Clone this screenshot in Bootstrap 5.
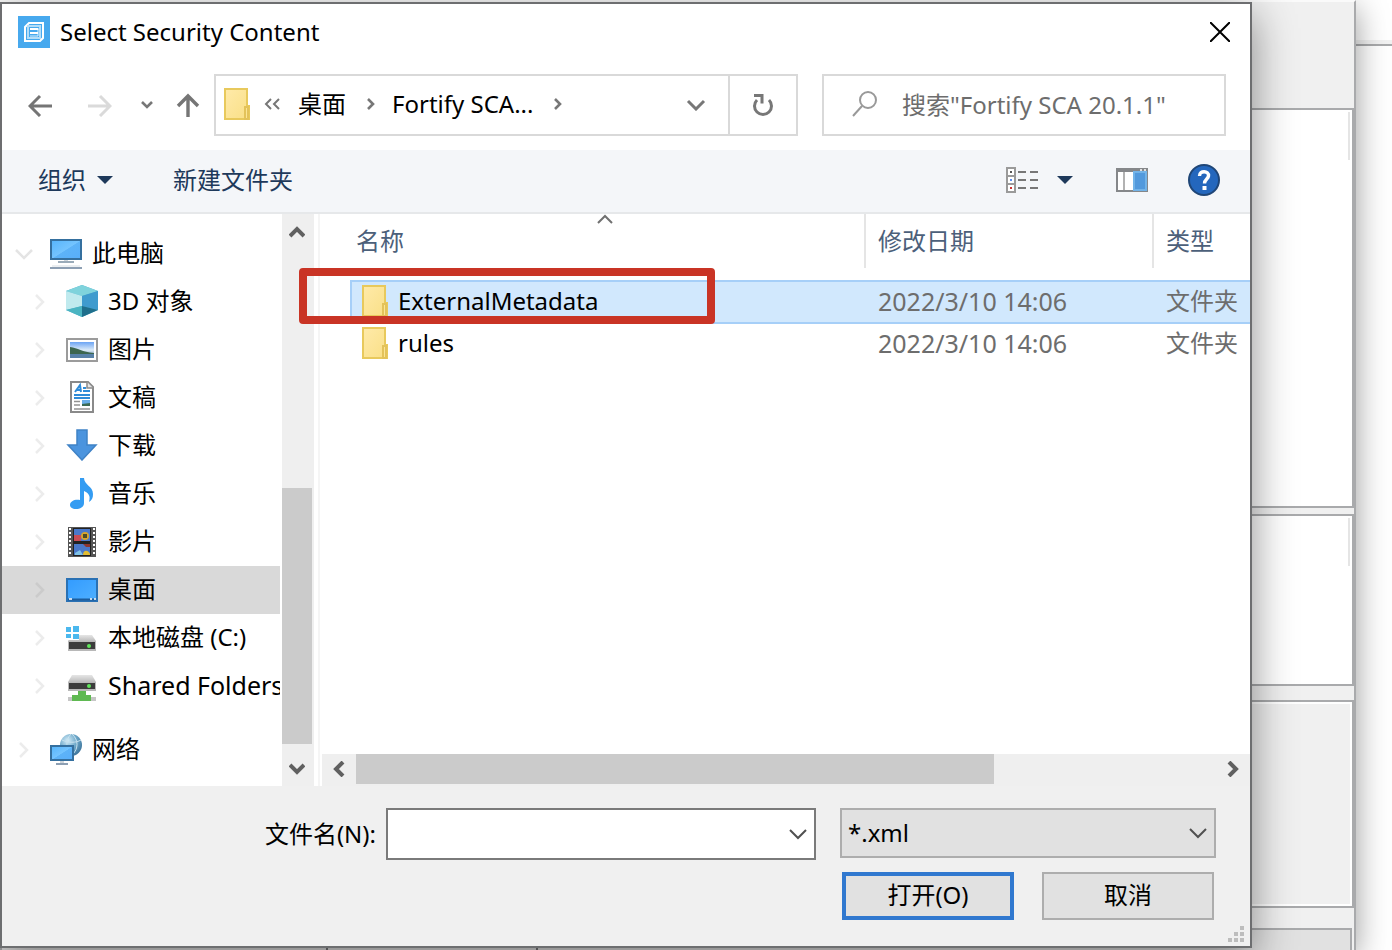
<!DOCTYPE html>
<html lang="zh-CN">
<head>
<meta charset="utf-8">
<meta name="viewport" content="width=device-width, initial-scale=1">
<title>Select Security Content</title>
<link href="https://cdn.jsdelivr.net/npm/bootstrap@5.3.0/dist/css/bootstrap.min.css" rel="stylesheet">
<style>
  :root { --face: #f0f0f0; --edge: #d9d9d9; --ink: #1e395b; --frame: #6d6e70; --rule: #a9aaac; }
  body { font-family: "Noto Sans", "Noto Sans CJK SC", sans-serif; font-size: 24px; line-height: 32px; color: #000; background: #fff; }
  svg { display: block; flex: none; }
  button { color: inherit; }
  .desk { min-height: 100vh; overflow: hidden; }
  .bare { border: 0; background: none; padding: 0; line-height: 32px; }
  .wide { font-size: 25px; }

  /* windows behind the dialog */
  .far-head { height: 46px; border-bottom: 2px solid var(--rule); background: linear-gradient(#fff 40px, #f2f2f2 40px); }
  .owner { position: absolute; inset: 0 36px 0 0; background: var(--face); border-right: 2px solid var(--rule); border-top: 2px solid #fafafa; box-shadow: 0 8px 30px rgba(0,0,0,.4); padding-top: 106px; }
  .pane { border: 2px solid var(--rule); background: #fff; padding: 2px; }
  .pane i { display: block; width: 2px; height: 48px; background: #e5e5e5; }
  .pane-a { flex: 400 1 400px; } .pane-b { flex: 172 1 172px; } .pane-c { flex: 208 1 208px; background: var(--face); box-shadow: inset 0 0 0 2px #fff; }
  .gap-a { height: 6px; } .gap-b { height: 14px; } .gap-c { height: 20px; }
  .under { height: 22px; margin-right: 2px; background: #e1e1e1; border: 2px solid var(--rule); border-bottom: 0; }
  .under span { border-right: 2px solid #77787a; }

  /* dialog */
  .dlg { position: absolute; inset: 2px 140px 2px 0; background: #fff; border: 2px solid var(--frame); box-shadow: 0 12px 40px rgba(0,0,0,.45); }
  .title-row { height: 56px; padding: 0 20px 0 16px; gap: 10px; }
  .nav-row { padding: 14px 24px 14px 26px; height: 90px; }
  .box { height: 62px; border: 2px solid var(--edge); background: #fff; }
  .path-bar { padding: 0 0 2px 8px; }
  .reload { width: 68px; border-left: 2px solid var(--edge) !important; }
  .find { width: 404px; margin-left: 24px; padding: 0 0 2px 28px; gap: 24px; }
  .find input { border: 0; outline: 0; padding: 0; min-width: 0; background: none; height: 40px; color: #6d6d6d; }
  .find input::placeholder { color: #6d6d6d; opacity: 1; }
  .tools { height: 64px; padding: 0 30px 2px 36px; background: #f4f6f9; border-bottom: 2px solid #e6e8ea; color: var(--ink); }

  .side { width: 278px; padding: 16px 0 12px; overflow: hidden; }
  .side a { display: flex; align-items: center; height: 48px; padding: 0 0 2px 12px; color: #000; text-decoration: none; white-space: nowrap; }
  .side a.sub { padding-left: 28px; }
  .side a.on { background: #d9d9d9; }
  .side .tw { width: 20px; margin-right: 16px; }
  .side .pic { width: 32px; height: 32px; margin-right: 10px; }
  .vbar { width: 32px; margin-left: 2px; background: #efefef; }
  .vbar .room { flex: 238 1 0; } .vbar .thumb { flex: 256 1 0; width: 30px; background: #cbcbcb; }
  .vbar button, .hbar button { display: flex; align-items: center; justify-content: center; }
  .vbar button { height: 36px; width: 30px; } .vbar .dn { height: 42px; padding-top: 8px; }
  .files { margin-left: 4px; border-left: 2px solid #f5f5f5; }
  .hbar { height: 32px; margin-left: 2px; background: #efefef; }
  .hbar button { width: 34px; height: 30px; }
  .hbar .thumb { flex: 638 1 0; height: 30px; background: #cbcbcb; } .hbar .room { flex: 222 1 0; }

  .list { table-layout: fixed; width: auto; margin-left: 30px; border-collapse: separate; border-spacing: 0; }
  .list th { font-weight: 400; color: #4c607a; padding: 0 0 12px; }
  .list th div { height: 54px; padding: 11px 0 0 12px; border-left: 2px solid #e5e5e5; white-space: nowrap; }
  .list th:first-child div { border-left: 0; padding-left: 6px; }
  .list td { height: 42px; padding: 0 0 4px 14px; color: #6d6d6d; white-space: nowrap; overflow: hidden; }
  .list td:first-child { padding-left: 12px; color: #000; }
  .list .on td { height: 44px; padding-bottom: 2px; background: #d1e8fd; border: solid #a6cff8; border-width: 2px 0; }
  .list .on td:first-child { border-left-width: 2px; padding-left: 10px; }
  .c-date { width: 288px; } .c-type { width: 98px; }
  .sort { position: absolute; top: 0; left: 277px; }
  .hot { position: absolute; left: -21px; top: 54px; width: 416px; height: 56px; border: 8px solid #c93425; border-radius: 4px; pointer-events: none; }

  .foot { background: var(--face); padding: 22px 34px 26px 32px; height: 160px; }
  .name-box { width: 430px; height: 52px; border: 2px solid #7a7a7a; background: #fff; margin: 0 24px 0 10px; }
  .name-box input { border: 0; outline: 0; background: none; min-width: 0; height: 44px; padding: 0 6px; }
  .name-box button { width: 32px; display: flex; align-items: center; justify-content: center; }
  .kind { width: 376px; height: 50px; border: 2px solid #adadad; border-radius: 0; padding: 0 36px 0 6px; font-size: 24px; line-height: 32px; color: #000; background-color: #e1e1e1; background-position: right 6px center; background-size: 20px 12px;
    background-image: url("data:image/svg+xml,%3Csvg xmlns='http://www.w3.org/2000/svg' viewBox='0 0 20 12'%3E%3Cpath d='M2 2l8 8 8-8' fill='none' stroke='%23505050' stroke-width='2'/%3E%3C/svg%3E"); }
  .act { width: 172px; height: 48px; border: 2px solid #adadad; border-radius: 0; background: #e1e1e1; color: #000; font-size: 24px; line-height: 32px; padding: 0 0 2px; }
  .act.main { border: 4px solid #3078cf; }
  .acts { gap: 28px; padding-right: 2px; margin-top: 12px; }
  .grip { position: absolute; right: 4px; bottom: 2px; }
</style>
</head>
<body>
<svg width="0" height="0" class="position-absolute" aria-hidden="true">
  <defs>
    <linearGradient id="gb" x1="0" y1="0" x2="1" y2="1"><stop offset="0" stop-color="#55b4fb"/><stop offset=".5" stop-color="#74c4ff"/><stop offset=".52" stop-color="#5db3f8"/><stop offset="1" stop-color="#58aefa"/></linearGradient>
    <linearGradient id="gd" x1="0" y1="0" x2="1" y2="1"><stop offset="0" stop-color="#329bff"/><stop offset="1" stop-color="#4fb0ff"/></linearGradient>
    <linearGradient id="gf" x1="0" y1="0" x2="1" y2="1"><stop offset="0" stop-color="#ffeaa9"/><stop offset="1" stop-color="#f9df86"/></linearGradient>
    <linearGradient id="gp" x1="0" y1="0" x2="0" y2="1"><stop offset="0" stop-color="#6ba4f4"/><stop offset=".5" stop-color="#dcebf8"/><stop offset="1" stop-color="#557fa5"/></linearGradient>
    <linearGradient id="gt" x1="0" y1="0" x2="0" y2="1"><stop offset="0" stop-color="#e6e6e6"/><stop offset="1" stop-color="#bcbcbc"/></linearGradient>
    <radialGradient id="gg" cx=".35" cy=".3" r=".8"><stop offset="0" stop-color="#d5edf8"/><stop offset=".5" stop-color="#6fa9ca"/><stop offset="1" stop-color="#356c94"/></radialGradient>
    <symbol id="folder" viewBox="0 0 26 32"><path d="M1 1h22v17h2v13H1z" fill="url(#gf)" stroke="#e8c95c" stroke-width="2"/><path d="M21 31V19h3v12z" fill="#fbe594" stroke="#e3c25a" stroke-width="2"/></symbol>
    <symbol id="right" viewBox="0 0 20 20"><path d="M6 4l7 7-7 7" fill="none" stroke="#ececec" stroke-width="2.5"/></symbol>
    <symbol id="crumb" viewBox="0 0 10 14"><path d="M2 2l5 5-5 5" fill="none" stroke="#777" stroke-width="2.6"/></symbol>
    <symbol id="caret" viewBox="0 0 16 10"><path d="M0 1h16L8 9z" fill="#1e395b"/></symbol>
    <symbol id="thin" viewBox="0 0 20 12"><path d="M2 2l8 8 8-8" fill="none" stroke="#505050" stroke-width="2"/></symbol>
  </defs>
</svg>

<div class="desk position-relative">
  <div class="far-head"></div>
  <div class="owner d-flex flex-column" aria-hidden="true">
    <div class="pane pane-a d-flex justify-content-end"><i></i></div><div class="gap-a"></div>
    <div class="pane pane-b d-flex justify-content-end"><i></i></div><div class="gap-b"></div>
    <div class="pane pane-c"></div><div class="gap-c"></div>
    <div class="under d-flex"><span style="width:24.2%"></span><span style="width:15.6%"></span></div>
  </div>

  <main class="dlg d-flex flex-column">
    <header class="title-row d-flex align-items-center">
      <svg width="32" height="32" viewBox="0 0 32 32"><path fill="#47a9ee" d="M0 0h32v32H0z"/><path d="M11 7h14v15l-3 3H7V11z" fill="none" stroke="#fff" stroke-width="2"/><path d="M10 10h12v12H10z" fill="#47a9ee" stroke="#b4def9" stroke-width="2"/><path d="M13 13h8M13 17h7M20 13v7h-8" fill="none" stroke="#d9effc" stroke-width="1"/><path d="M12 13h8M12 17h8" fill="none" stroke="#fff" stroke-width="2"/></svg>
      <span>Select Security Content</span>
      <button class="bare ms-auto" type="button" aria-label="关闭"><svg width="20" height="20" viewBox="0 0 20 20"><path d="M0 0l20 20M20 0L0 20" stroke="#000" stroke-width="2"/></svg></button>
    </header>

    <div class="nav-row d-flex align-items-center">
      <button class="bare" type="button" aria-label="后退"><svg width="24" height="24" viewBox="0 0 24 24"><path d="M24 13H2M12 3L2 13l10 10" fill="none" stroke="#757575" stroke-width="3"/></svg></button>
      <button class="bare" type="button" aria-label="前进" style="margin-left:36px"><svg width="24" height="24" viewBox="0 0 24 24"><path d="M0 13h22M12 3l10 10-10 10" fill="none" stroke="#dadada" stroke-width="3"/></svg></button>
      <button class="bare" type="button" aria-label="最近" style="margin-left:28px"><svg width="14" height="10" viewBox="0 0 14 10"><path d="M2 2l5 5 5-5" fill="none" stroke="#777" stroke-width="2.6"/></svg></button>
      <button class="bare" type="button" aria-label="上移" style="margin-left:22px"><svg width="24" height="24" viewBox="0 0 24 24"><path d="M12 24V3M2 13L12 3l10 10" fill="none" stroke="#757575" stroke-width="3.4"/></svg></button>
      <div class="box d-flex flex-fill" style="margin-left:14px">
        <nav class="path-bar d-flex align-items-center flex-fill text-nowrap" aria-label="地址">
          <svg width="26" height="32"><use href="#folder"/></svg>
          <svg width="16" height="14" viewBox="0 0 16 14" style="margin-left:14px"><path d="M7 2L2 7l5 5M15 2l-5 5 5 5" fill="none" stroke="#777" stroke-width="2"/></svg>
          <a class="text-black text-decoration-none" href="#" style="margin-left:18px">桌面</a>
          <svg width="10" height="14" style="margin:0 16px 0 20px"><use href="#crumb"/></svg>
          <a class="text-black text-decoration-none" href="#">Fortify SCA...</a>
          <svg width="10" height="14" style="margin-left:20px"><use href="#crumb"/></svg>
          <button class="bare ms-auto" type="button" aria-label="以前的位置" style="margin-right:22px"><svg width="20" height="14" viewBox="0 0 20 14"><path d="M2 4l8 8 8-8" fill="none" stroke="#777" stroke-width="3"/></svg></button>
        </nav>
        <button class="bare reload d-flex align-items-center justify-content-center" type="button" aria-label="刷新"><svg width="22" height="24" viewBox="0 0 22 24"><path d="M17 6a8.500 8.500 0 1 1-12 0" fill="none" stroke="#777" stroke-width="3" transform="translate(0 1)"/><path d="M2 2.500h8v8" fill="none" stroke="#777" stroke-width="3"/></svg></button>
      </div>
      <label class="box find d-flex align-items-center">
        <svg width="26" height="26" viewBox="0 0 26 26"><circle cx="16" cy="9" r="8" fill="none" stroke="#999" stroke-width="2"/><path d="M10 15L1 25" stroke="#999" stroke-width="2"/></svg>
        <input class="flex-fill" type="text" aria-label="搜索" placeholder='搜索"Fortify SCA 20.1.1"'>
      </label>
    </div>

    <div class="tools d-flex align-items-center">
      <button class="bare d-flex align-items-center" type="button">组织<svg width="16" height="10" style="margin-left:11px"><use href="#caret"/></svg></button>
      <button class="bare" type="button" style="margin-left:60px">新建文件夹</button>
      <button class="bare d-flex align-items-center ms-auto" type="button" aria-label="更改视图">
        <svg width="34" height="26" viewBox="0 0 34 26"><path d="M1 1h8v24H1zM1 9h8M1 17h8" fill="#fff" stroke="#9a9a9a" stroke-width="2"/><path d="M4 4h2v2H4z" fill="#555"/><path d="M4 12h2v2H4z" fill="#5b8def"/><path d="M4 20h2v2H4z" fill="#c33"/><path d="M12 5h8m4 0h8M12 13h8m4 0h8M12 21h8m4 0h8" stroke="#777" stroke-width="2"/></svg>
        <svg width="16" height="10" style="margin-left:17px"><use href="#caret"/></svg>
      </button>
      <button class="bare" type="button" aria-label="预览窗格" style="margin-left:43px"><svg width="32" height="24" viewBox="0 0 32 24"><path d="M1 1h30v22H1z" fill="#fff" stroke="#85878a" stroke-width="2"/><path d="M1 2h30" stroke="#85878a" stroke-width="4"/><path d="M8 4v18" stroke="#999" stroke-width="1.5"/><path d="M18 4h12v18H18z" fill="#5299dc" stroke="#72b3e8" stroke-width="2"/><path d="M24 2h2m2 0h2" stroke="#fff" stroke-width="1.5"/></svg></button>
      <button class="bare" type="button" aria-label="帮助" style="margin-left:40px"><svg width="32" height="32" viewBox="0 0 32 32"><circle cx="16" cy="16" r="15" fill="#2467bd" stroke="#1f4677" stroke-width="2"/><path d="M11.500 12c0-6 9.500-5.500 9 0-.3 3-4 3.200-4 7.500" fill="none" stroke="#fff" stroke-width="3.400"/><path d="M14.500 22h4v4h-4z" fill="#fff"/></svg></button>
    </div>

    <div class="d-flex flex-fill">
      <nav class="side flex-shrink-0" aria-label="位置">
        <a href="#"><svg class="tw" width="20" height="20" viewBox="0 0 20 20"><path d="M2 7l8 8 8-8" fill="none" stroke="#e4e4e4" stroke-width="2.500"/></svg>
          <svg class="pic" viewBox="0 0 32 32"><path d="M1 3h30v19H1z" fill="url(#gb)" stroke="#35709f" stroke-width="2"/><path d="M14 23h4v2h-4z" fill="#cfd6dc"/><path d="M8 25h16" stroke="#9aabb9" stroke-width="2"/><path d="M2 29h28" stroke="#d5dde3" stroke-width="1"/><path d="M0 31h32" stroke="#8d9fb3" stroke-width="2"/></svg>此电脑</a>
        <a class="sub" href="#"><svg class="tw" height="20"><use href="#right"/></svg>
          <svg class="pic" viewBox="0 0 32 32"><path d="M16 0l16 6v19l-16 7-16-7V6z" fill="#4fb0cf"/><path d="M0 6l16-6 16 6-16 5z" fill="#7fd3dc"/><path d="M0 6l16 5v10L0 25z" fill="#c0eaee"/><path d="M16 11l16-5v19l-16-4z" fill="#3f9bce"/><path d="M0 25l16-4v11z" fill="#4bb5c2"/><path d="M16 21l16 4-16 7z" fill="#1f6f8c"/></svg>3D 对象</a>
        <a class="sub" href="#"><svg class="tw" height="20"><use href="#right"/></svg>
          <svg class="pic" viewBox="0 0 32 32"><path d="M1 6h30v22H1z" fill="#fff" stroke="#9b9b9b" stroke-width="2"/><path d="M4 9h24v16H4z" fill="url(#gp)"/><path d="M4 14c8 1 12 5 24 6v2H4z" fill="#3c6650"/><path d="M4 21h24v4H4z" fill="#5781a8"/></svg>图片</a>
        <a class="sub" href="#"><svg class="tw" height="20"><use href="#right"/></svg>
          <svg class="pic" viewBox="0 0 32 32"><path d="M5 1h17l5 5v25H5z" fill="#fff" stroke="#8a8a8a" stroke-width="2"/><path d="M21 1v6h6" fill="#e5e5e5" stroke="#8a8a8a" stroke-width="1.500"/><path d="M9 11l5-7 1 7M10 9h5M17 7h3M17 10h7M8 14h16M8 17h16" fill="none" stroke="#2e8bd8" stroke-width="2"/><path d="M8 20.500h6M8 24h6M8 28h16" stroke="#929292" stroke-width="1.500"/><path d="M16 19h8v6h-8z" fill="#6aaee8"/><path d="M16 23l8-1v3h-8z" fill="#3c6b55"/></svg>文稿</a>
        <a class="sub" href="#"><svg class="tw" height="20"><use href="#right"/></svg>
          <svg class="pic" viewBox="0 0 32 32"><path d="M11 1h10v15h9L16 31 2 16h9z" fill="#4b94de" stroke="#3f82c6" stroke-width="1.500"/></svg>下载</a>
        <a class="sub" href="#"><svg class="tw" height="20"><use href="#right"/></svg>
          <svg class="pic" viewBox="0 0 32 32"><path d="M14 1h4c0 7 9 8 9 16 0 4-1 6-4 8 2-7-1-9-5-11v12c0 4-4 6-8 6s-6-2-6-4c0-4 5-6 10-5z" fill="#349cf2"/></svg>音乐</a>
        <a class="sub" href="#"><svg class="tw" height="20"><use href="#right"/></svg>
          <svg class="pic" viewBox="0 0 32 32"><path d="M2 2h28v30H2z" fill="#555"/><path d="M4 3v28M28 3v28" stroke="#fff" stroke-width="2" stroke-dasharray="2 2"/><path d="M7 3h18v28H7z" fill="#222"/><path d="M8 4h16v12H8zM8 19h16v11H8z" fill="#4a78c9"/><path d="M8 10h7v6H8z" fill="#c94c55"/><circle cx="19" cy="11" r="4" fill="#d8a52b"/><path d="M17 9h4v4h-4z" fill="#4e4a22"/><path d="M17 19h7v3h-4z" fill="#8e3630"/><path d="M9 28l5-3 3 5H9z" fill="#80c3e8"/><path d="M17 30c0-6 6-5 7-1v1z" fill="#e4bd31"/></svg>影片</a>
        <a class="sub on" href="#" aria-current="true"><svg class="tw" height="20" viewBox="0 0 20 20"><path d="M6 4l7 7-7 7" fill="none" stroke="#cbcbcb" stroke-width="2.500"/></svg>
          <svg class="pic" viewBox="0 0 32 32"><path d="M1 6h30v22H1z" fill="url(#gd)" stroke="#2a71b4" stroke-width="2"/><path d="M2 26.500h28" stroke="#1d5d9c" stroke-width="2"/><path d="M3 26h3M24 26h2M28 26h2" stroke="#fff" stroke-width="1.500"/></svg>桌面</a>
        <a class="sub" href="#"><svg class="tw" height="20"><use href="#right"/></svg>
          <svg class="pic" viewBox="0 0 32 32"><path d="M6 14h20l4 6H2z" fill="url(#gt)"/><path d="M2 20h28v10H2z" fill="#b8b8b8"/><path d="M3 21h26v7H3z" fill="#3c3c3c"/><circle cx="23" cy="25" r="2" fill="#5fe65a"/><path d="M-1 12h14v7H-1z" fill="#fff"/><path d="M0 6h5v5H0zM7 5h6v6H7zM0 13h5v4H0zM7 13h6v5H7z" fill="#4bb8ee"/></svg>本地磁盘 (C:)</a>
        <a class="sub" href="#"><svg class="tw" height="20"><use href="#right"/></svg>
          <svg class="pic" viewBox="0 0 32 32"><path d="M6 6h20l4 7H2z" fill="url(#gt)"/><path d="M2 13h28v9H2z" fill="#b8b8b8"/><path d="M3 14h26v6H3z" fill="#3c3c3c"/><circle cx="23" cy="17" r="2" fill="#5fe65a"/><path d="M2 28h28v4H2z" fill="#c6c6c6"/><path d="M12 22h8v4h5v6H6v-6h6z" fill="#5fb952"/></svg><span class="wide">Shared Folders</span></a>
        <a class="mt-3" href="#"><svg class="tw" height="20"><use href="#right"/></svg>
          <svg class="pic" viewBox="0 0 32 32"><circle cx="21" cy="12" r="11" fill="url(#gg)"/><path d="M12 7c6 3 14 3 19 0M21 1c-6 6-5 15 0 20M22 1c7 6 6 15 1 20" fill="none" stroke="#c8e2ef" stroke-width="1"/><path d="M1 13h22v14H1z" fill="url(#gb)" stroke="#35709f" stroke-width="2"/><path d="M10 28h4v2h-4z" fill="#cfd6dc"/><path d="M6 31h12" stroke="#8d9fb3" stroke-width="2"/></svg>网络</a>
      </nav>
      <div class="vbar d-flex flex-column flex-shrink-0">
        <button class="bare" type="button" aria-label="向上滚动"><svg width="16" height="12" viewBox="0 0 16 12"><path d="M1 10l7-7 7 7" fill="none" stroke="#606060" stroke-width="4"/></svg></button>
        <div class="room"></div><div class="thumb"></div>
        <button class="bare dn" type="button" aria-label="向下滚动"><svg width="16" height="12" viewBox="0 0 16 12"><path d="M1 2l7 7 7-7" fill="none" stroke="#606060" stroke-width="4"/></svg></button>
      </div>
      <section class="files position-relative d-flex flex-column flex-fill">
        <table class="list">
          <colgroup><col><col class="c-date"><col class="c-type"></colgroup>
          <thead><tr><th scope="col"><div>名称</div></th><th scope="col"><div>修改日期</div></th><th scope="col"><div>类型</div></th></tr></thead>
          <tbody>
            <tr class="on"><td><div class="d-flex align-items-center"><svg width="26" height="32" style="margin-right:10px"><use href="#folder"/></svg>ExternalMetadata</div></td><td class="wide">2022/3/10 14:06</td><td>文件夹</td></tr>
            <tr><td><div class="d-flex align-items-center"><svg width="26" height="32" style="margin-right:10px"><use href="#folder"/></svg>rules</div></td><td class="wide">2022/3/10 14:06</td><td>文件夹</td></tr>
          </tbody>
        </table>
        <svg class="sort" width="16" height="10" viewBox="0 0 16 10"><path d="M1 9l7-7 7 7" fill="none" stroke="#707070" stroke-width="2"/></svg>
        <div class="hot"></div>
        <div class="hbar d-flex mt-auto">
          <button class="bare" type="button" aria-label="向左滚动"><svg width="12" height="16" viewBox="0 0 12 16"><path d="M10 1L3 8l7 7" fill="none" stroke="#606060" stroke-width="4"/></svg></button>
          <div class="thumb"></div><div class="room"></div>
          <button class="bare" type="button" aria-label="向右滚动"><svg width="12" height="16" viewBox="0 0 12 16"><path d="M2 1l7 7-7 7" fill="none" stroke="#606060" stroke-width="4"/></svg></button>
        </div>
      </section>
    </div>

    <form class="foot position-relative">
      <div class="d-flex align-items-start justify-content-end">
        <label for="fname" class="align-self-center text-nowrap">文件名(N):</label>
        <div class="name-box d-flex align-items-center">
          <input class="flex-fill" id="fname" type="text">
          <button class="bare" type="button" aria-label="展开"><svg width="20" height="12"><use href="#thin"/></svg></button>
        </div>
        <select class="form-select kind" aria-label="文件类型"><option>*.xml</option></select>
      </div>
      <div class="acts d-flex justify-content-end">
        <button class="btn act main" type="button">打开(O)</button>
        <button class="btn act" type="button">取消</button>
      </div>
      <svg class="grip" width="18" height="18" viewBox="0 0 18 18"><path d="M12 0h4v4h-4zM6 6h4v4H6zM12 6h4v4h-4zM0 12h4v4H0zM6 12h4v4H6zM12 12h4v4h-4z" fill="#bdbdbd"/></svg>
    </form>
  </main>
</div>
<script src="https://cdn.jsdelivr.net/npm/bootstrap@5.3.0/dist/js/bootstrap.bundle.min.js"></script>
</body>
</html>
